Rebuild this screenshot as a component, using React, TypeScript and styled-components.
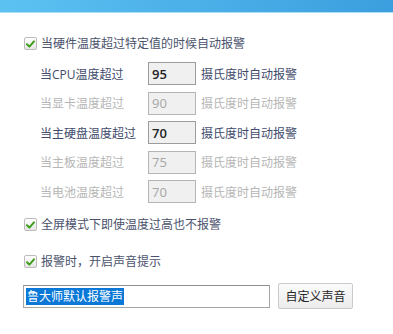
import React from 'react'
import styled, { createGlobalStyle } from 'styled-components'

const GlobalStyle = createGlobalStyle`
  html, body {
    margin: 0;
    padding: 0;
    background: #ffffff;
  }
  body {
    font-family: "Open Sans", "Noto Sans CJK SC", sans-serif;
    font-size: 12px;
  }
`

const Page = styled.div`
  width: 393px;
  height: 334px;
  overflow: hidden;
  background: #ffffff;
`

const TitleBar = styled.div`
  height: 12px;
  background: linear-gradient(90deg, #5cc2f2 0%, #4db1e9 45%, #3b9fdf 100%);
  border-bottom: 1px solid #a9ddf6;
`

const Content = styled.div`
  padding-left: 24px;
  display: flex;
  flex-direction: column;
`

const CheckRow = styled.label<{ $top: number }>`
  display: flex;
  align-items: center;
  gap: 4px;
  height: 13px;
  margin-top: ${p => p.$top}px;
  color: #4a526c;
  line-height: 13px;
  white-space: nowrap;
`

const Box = styled.span`
  box-sizing: border-box;
  width: 13px;
  height: 13px;
  border: 1px solid #bcbcbc;
  border-radius: 2px;
  background: linear-gradient(#ffffff, #e6e6e6);
  display: flex;
  align-items: center;
  justify-content: center;
  flex-shrink: 0;
`

const Thresholds = styled.div`
  margin-top: 12px;
  padding-left: 16px;
  display: flex;
  flex-direction: column;
  gap: 6.5px;
`

const ThresholdRow = styled.div<{ $off?: boolean }>`
  display: grid;
  grid-template-columns: 103px 48px auto;
  column-gap: 5px;
  align-items: center;
  height: 23px;
  color: ${p => (p.$off ? '#b6b6b6' : '#414b6c')};
  white-space: nowrap;
`

const ValueBox = styled.div<{ $off?: boolean }>`
  box-sizing: border-box;
  height: 23px;
  border: 1px solid ${p => (p.$off ? '#b4b4b4' : '#9c9c9c')};
  background: #f0f0f0;
  padding-left: 3px;
  display: flex;
  align-items: center;
  font-size: 13px;
  font-weight: ${p => (p.$off ? 400 : 600)};
  color: ${p => (p.$off ? '#a6a6a6' : '#222222')};
`

const SoundRow = styled.div`
  margin-top: 15px;
  margin-left: -1px;
  display: flex;
  align-items: center;
  gap: 8px;
  height: 26px;
`

const SoundField = styled.div`
  box-sizing: border-box;
  width: 247px;
  height: 23px;
  border: 1px solid #a5a5a5;
  border-top-color: #8e8e8e;
  padding-left: 2px;
  display: flex;
  align-items: center;
`

const Selected = styled.span`
  background: #0a78d7;
  color: #ffffff;
  height: 17px;
  line-height: 17px;
  padding: 0 1px;
  white-space: nowrap;
`

const Button = styled.button`
  box-sizing: border-box;
  width: 75px;
  height: 26px;
  border: 1px solid #cacaca;
  border-radius: 2px;
  background: linear-gradient(#fbfbfb, #ececec);
  font-family: inherit;
  font-size: 12px;
  color: #262626;
  padding: 0;
`

const Check = () => (
  <Box>
    <svg width="9" height="8" viewBox="0 0 9 8">
      <path d="M1 4.2 L3.4 6.6 L8 1.4" fill="none" stroke="#3d9e19" strokeWidth="2" strokeLinecap="round" strokeLinejoin="round" />
    </svg>
  </Box>
)

const rows = [
  { label: '当CPU温度超过', value: '95', off: false },
  { label: '当显卡温度超过', value: '90', off: true },
  { label: '当主硬盘温度超过', value: '70', off: false },
  { label: '当主板温度超过', value: '75', off: true },
  { label: '当电池温度超过', value: '70', off: true },
]

const App: React.FC = () => {
  return (
    <Page>
      <GlobalStyle />
      <TitleBar />
      <Content>
        <CheckRow $top={24}>
          <Check />
          当硬件温度超过特定值的时候自动报警
        </CheckRow>
        <Thresholds>
          {rows.map(r => (
            <ThresholdRow key={r.label} $off={r.off}>
              <span>{r.label}</span>
              <ValueBox $off={r.off}>{r.value}</ValueBox>
              <span>摄氏度时自动报警</span>
            </ThresholdRow>
          ))}
        </Thresholds>
        <CheckRow $top={15}>
          <Check />
          全屏模式下即使温度过高也不报警
        </CheckRow>
        <CheckRow $top={24}>
          <Check />
          报警时，开启声音提示
        </CheckRow>
        <SoundRow>
          <SoundField>
            <Selected>鲁大师默认报警声</Selected>
          </SoundField>
          <Button>自定义声音</Button>
        </SoundRow>
      </Content>
    </Page>
  )
}

export default App
